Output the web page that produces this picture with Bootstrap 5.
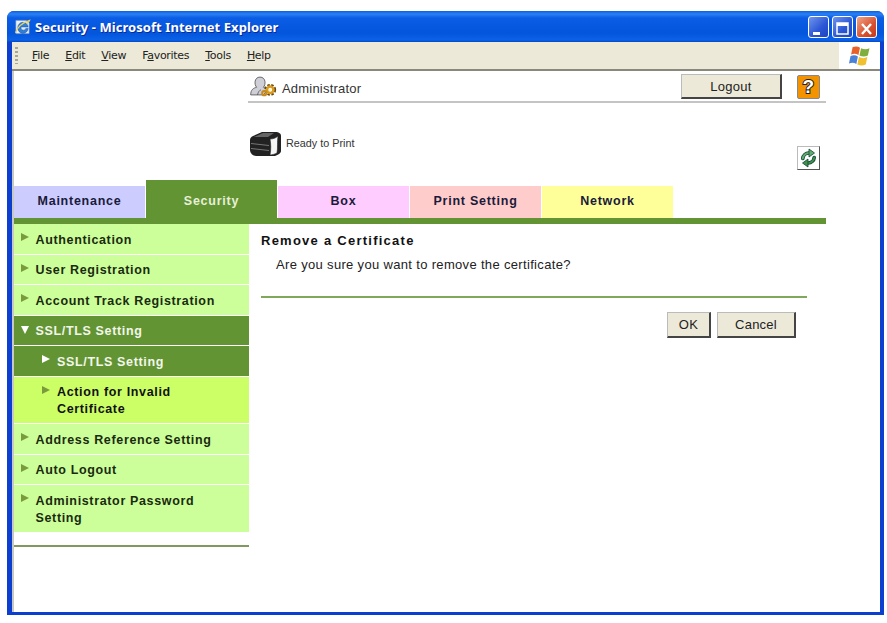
<!DOCTYPE html>
<html lang="en"><head><meta charset="utf-8"><title>Security</title>
<link rel="stylesheet" href="https://cdn.jsdelivr.net/npm/bootstrap@5.3.0/dist/css/bootstrap.min.css">
<style>
html,body{height:623px;overflow:hidden;background:#fff}
body{font-family:"Liberation Sans",Arial,sans-serif;color:#111;padding:11px 3px 8px 7px}
.win{height:604px;border-radius:7px 7px 0 0;display:flex;flex-direction:column;background:#0c3fd0;overflow:hidden}
.tbar{height:31px;flex:none;background:linear-gradient(#0a5fe6 0,#2b80f2 3px,#0a5de4 7px,#0355dc 22px,#0b62e6 29px,#0646c8 31px);padding:0 7px 0 7px;gap:4px}
.tbar .ttl{font:700 13px "Noto Sans",sans-serif;letter-spacing:.06px;color:#fff;text-shadow:1px 1px #0a2a9a}
.wbtns{gap:3px}
.wbtn{width:21px;height:22px;border:1px solid #fff;border-radius:3px;background:linear-gradient(135deg,#6f95ee,#2a55d4 60%,#1f45c0);display:block}
.wbtn.x{background:linear-gradient(135deg,#eea58a,#d9512f 60%,#c23a1a)}
.inner{flex:1;min-height:0;margin:0 4px 3px 5px;display:flex;flex-direction:column;background:#fff}
.mbar{height:29px;flex:none;background:#ece9d8;border-bottom:2px solid #8a887c;font:11px "DejaVu Sans",sans-serif;letter-spacing:-.3px;color:#222}
.grip{width:3px;height:17px;margin:0 14px 0 3px;background:repeating-linear-gradient(#a8a698 0 2px,transparent 2px 4px)}
.mbar .mi{margin-right:16px}
.flag{width:41px;height:27px;background:#fff;margin-left:auto;display:flex;align-items:center;justify-content:center}
.page{flex:1;border-left:2px solid #c8c8c4;min-height:0;display:flex;flex-direction:column}
.hdr{height:109px;flex:none;padding-left:234px}
.hrow1{height:29px;border-bottom:2px solid #c4c4c4;margin-top:3px;font-size:13px;letter-spacing:.2px;color:#333;width:578px}
.hrow1 .who{padding-top:3px}
.admin-ico{margin:-3px 5px 0 1px}
.xpb{background:#ece9d8;border:1px solid #444;border-right-width:2px;border-bottom-width:2px;border-top-color:#bbb;border-left-color:#bbb;font-size:13px;color:#222;letter-spacing:.25px;display:flex;align-items:center;justify-content:center;padding:1px 0 0}
.logout{width:101px;height:25px;margin-left:auto;margin-top:-2px}
.help{width:23px;height:24px;margin:-2px 6px 0 15px;background:#f49300;border:1px solid #888;border-radius:2px;font:700 19px/1 "Liberation Sans",sans-serif;color:#fff;-webkit-text-stroke:2px #222;paint-order:stroke fill;display:flex;align-items:center;justify-content:center}
.ready{font-size:10.8px;color:#333;margin-top:26px;height:28px;width:578px;margin-left:2px}
.refwrap{height:0}
.ref{width:23px;height:24px;left:783px;top:-34px;border:1px solid #bbb;border-right-color:#555;border-bottom-color:#555;display:flex;align-items:center;justify-content:center;background:#fff}
.tabs{height:44px;flex:none;width:812px;border-bottom:6px solid #639433;align-items:flex-end;gap:1px}
.tabs div{width:131px;height:32px;font-weight:700;font-size:12.5px;letter-spacing:.75px;color:#1a1a3a;display:flex;align-items:center;justify-content:center;padding-bottom:1px}
.tabs div.on{height:38px;background:#639433;color:#e6f0d8;padding-top:6px}
.t1{background:#ccccff}.t3{background:#ffccff}.t4{background:#ffcccc}.t5{background:#ffff99}
.side{width:235px;flex:none}
.side a{display:block;text-decoration:none;background:#ccff99;color:#1a2a10;font-weight:700;font-size:12.5px;letter-spacing:.65px;line-height:17px;padding:7.5px 4px 5px 21.5px;margin-bottom:1px;position:relative}
.side a:before{content:"";position:absolute;left:7px;top:9px;border-left:8px solid #7a9a3c;border-top:4.500px solid transparent;border-bottom:4.500px solid transparent}
.side a.open{background:#639433;color:#f2f6ea}
.side a.open:before{border-top:8px solid #fff;border-bottom:0;border-left:4.500px solid transparent;border-right:4.500px solid transparent;left:7px;top:10px}
.side a.sub{padding-left:43px;background:#ccff66;color:#111}
.side a.sub:before{left:28px;top:9px}
.side a.cur{padding-left:43px;background:#639433;color:#f2f6ea}
.side a.cur:before{left:28px;top:9px;border-left-color:#fff}
.side hr{margin:13px 0 0;border:0;border-top:2px solid #7f9960;opacity:1}
.main{flex:1;padding:9px 0 0 12px}
.main h1{font-size:13px;font-weight:700;letter-spacing:1.25px;margin:0;color:#111;line-height:15px}
.main p{font-size:13px;letter-spacing:.33px;margin:9px 0 0 15px;line-height:15px;color:#222}
.main hr{width:546px;margin:24px 0 0;border:0;border-top:2px solid #7fa85a;opacity:1}
.acts{width:535px;gap:6px;margin-top:14px}
.acts button{height:26px}
.b-ok{width:44px}.b-cancel{width:79px}
</style></head>
<body>
<div class="win">
 <div class="tbar d-flex align-items-center">
  <svg width="17" height="18" viewBox="0 0 18 18"><path d="M2 2h11l3 3v11H2z" fill="#e8f0fb" stroke="#7f9fd0" stroke-width=".6"/><path d="M4 10a5.500 5.500 0 0 1 11-1H7.500a2.500 2.500 0 0 0 5 1.500H15a5.500 5.500 0 0 1-11-.5z" fill="#2f7fd8" stroke="#1c4f9f" stroke-width=".5"/><path d="M1.500 15C4 9 10 4 16.500 2c-1 2-2 3-3 4" fill="none" stroke="#e8d060" stroke-width="1.200"/></svg>
  <span class="ttl">Security - Microsoft Internet Explorer</span>
  <span class="d-flex wbtns ms-auto">
   <span class="wbtn"><svg width="19" height="20"><rect x="4" y="13" width="7" height="3" fill="#fff"/></svg></span>
   <span class="wbtn"><svg width="19" height="20"><rect x="4" y="4" width="11" height="11" fill="none" stroke="#fff" stroke-width="1.5"/><rect x="4" y="4" width="11" height="3" fill="#fff"/></svg></span>
   <span class="wbtn x"><svg width="19" height="20"><path d="M5 5l9 10M14 5L5 15" stroke="#fff" stroke-width="2.4"/></svg></span>
  </span>
 </div>
 <div class="inner">
  <div class="mbar d-flex align-items-center">
   <span class="grip"></span>
   <span class="mi"><u>F</u>ile</span><span class="mi"><u>E</u>dit</span><span class="mi"><u>V</u>iew</span><span class="mi">F<u>a</u>vorites</span><span class="mi"><u>T</u>ools</span><span class="mi"><u>H</u>elp</span>
   <span class="flag"><svg width="24" height="21" viewBox="0 0 22 20"><path d="M4 2q4-1.500 7 .5l-1.500 7q-3-2-7-.5z" fill="#e8602a"/><path d="M12 3q4 2 8 0l-1.500 7q-4 2-8 0z" fill="#7fae3c"/><path d="M2 10.500q4-1.500 7 .5l-1.500 7q-3-2-7-.5z" fill="#4a80d8"/><path d="M10 11.500q4 2 8 0l-1.500 7q-4 2-8 0z" fill="#f0c030"/></svg></span>
  </div>
  <div class="page">
   <div class="hdr">
    <div class="hrow1 d-flex align-items-center">
     <svg width="28" height="22" viewBox="0 0 33 25" class="flex-none admin-ico"><path d="M2 23c0-6 3-8 7-9-3-3-3-12 4-12s7 9 4 12c3 1 4 2 5 3l-5 6z" fill="#cfcfd8" stroke="#555"/><path d="M10 23c1-4 2-5 4-6" fill="none" stroke="#555"/><g fill="none"><circle cx="25" cy="17" r="5" stroke="#6a4a10" stroke-width="4" stroke-dasharray="2.500 1.500"/><circle cx="25" cy="17" r="3.800" stroke="#d99a20" stroke-width="3"/><circle cx="18" cy="21" r="2.500" stroke="#c98a18" stroke-width="2.400"/></g><circle cx="25" cy="17" r="1.500" fill="#fff3c0"/></svg>
     <span class="who">Administrator</span>
     <button class="xpb logout" type="button">Logout</button>
     <span class="help">?</span>
    </div>
    <div class="ready d-flex align-items-center">
     <svg width="32" height="27" viewBox="0 0 32 27" class="me-1 flex-none"><path d="M0 10c0-2 1-3 3-4l9-4h14c2 0 5 1 5 4v15c0 2-3 4-6 5H6c-3 0-6-3-6-6z" fill="#222"/><path d="M20 9c3 0 6-1 8-3-1 6 0 12-1 17-2 1-5 2-7 2 1-5 1-11 0-16z" fill="#f6f6f6" stroke="#222" stroke-width=".6"/><path d="M1 13.500l18 2M1 18.500l18 2" stroke="#777"/><path d="M4 7l9-4h11l-6 4z" fill="#666"/></svg>
     <span>Ready to Print</span>
    </div>
   </div>
   <div class="position-relative refwrap"><span class="ref position-absolute"><svg width="19" height="20" viewBox="0 0 19 20"><g fill="none" stroke-linecap="round"><path d="M3.800 10.500A6 6 0 0 1 10 5" stroke="#143" stroke-width="3.600"/><path d="M15.200 9.500A6 6 0 0 1 9 15" stroke="#143" stroke-width="3.600"/><path d="M3.800 10.500A6 6 0 0 1 10 5" stroke="#5fae6f" stroke-width="2"/><path d="M15.200 9.500A6 6 0 0 1 9 15" stroke="#3f8f4f" stroke-width="2"/></g><path d="M10 1l5.500 4L10 9z" fill="#5fae6f" stroke="#143" stroke-width=".8"/><path d="M9 11l-5.500 4L9 19z" fill="#3f8f4f" stroke="#143" stroke-width=".8"/></svg></span></div>
   <div class="tabs d-flex">
    <div class="t1">Maintenance</div><div class="on">Security</div><div class="t3">Box</div><div class="t4">Print Setting</div><div class="t5">Network</div>
   </div>
   <div class="d-flex flex-grow-1">
    <nav class="side">
     <a href="#">Authentication</a><a href="#">User Registration</a><a href="#">Account Track Registration</a>
     <a href="#" class="open">SSL/TLS Setting</a><a href="#" class="cur">SSL/TLS Setting</a><a href="#" class="sub">Action for Invalid<br>Certificate</a>
     <a href="#">Address Reference Setting</a><a href="#">Auto Logout</a><a href="#">Administrator Password<br>Setting</a>
     <hr>
    </nav>
    <main class="main">
     <h1>Remove a Certificate</h1>
     <p>Are you sure you want to remove the certificate?</p>
     <hr>
     <div class="acts d-flex justify-content-end">
      <button class="xpb b-ok" type="button">OK</button><button class="xpb b-cancel" type="button">Cancel</button>
     </div>
    </main>
   </div>
  </div>
 </div>
</div>
<script src="https://cdn.jsdelivr.net/npm/bootstrap@5.3.0/dist/js/bootstrap.bundle.min.js"></script>
</body></html>
